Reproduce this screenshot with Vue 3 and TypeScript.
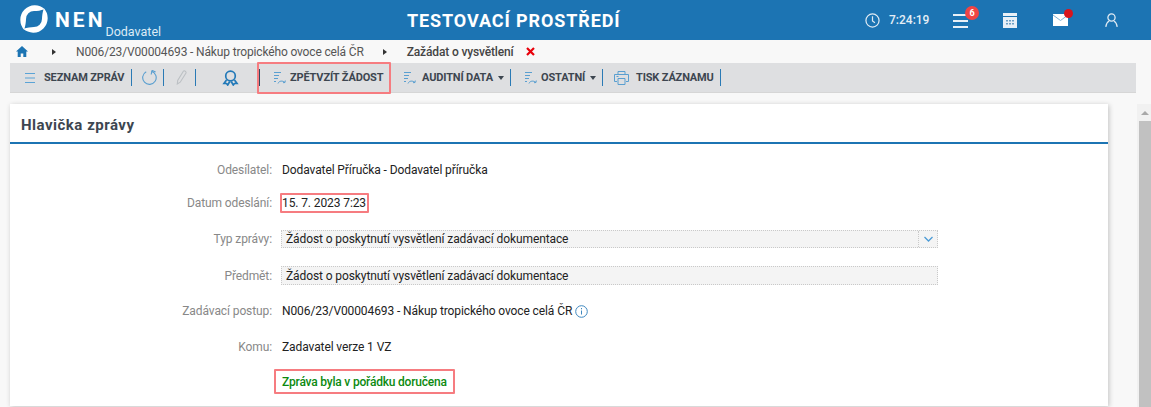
<script setup lang="ts">
const rows = [
  { label: 'Odesílatel:', value: 'Dodavatel Příručka - Dodavatel příručka' },
]
</script>

<template>
  <div class="page">
    <header class="top">
      <div class="brand">
        <svg class="logo" width="30" height="30" viewBox="2 2 32 32">
          <path d="M7.500 29.400A15.500 15.500 0 0 1 29.400 7.500C25 9 21.500 9.300 18 9.500A8.500 8.500 0 0 0 9.500 18C9.300 21.500 9 25 7.500 29.400Z" fill="#fff" />
          <path d="M7.500 29.400A15.500 15.500 0 0 1 29.400 7.500C25 9 21.500 9.300 18 9.500A8.500 8.500 0 0 0 9.500 18C9.300 21.500 9 25 7.500 29.400Z" fill="#fff" transform="rotate(180 18 18)" />
        </svg>
        <span class="nen">NEN</span>
        <span class="role">Dodavatel</span>
      </div>
      <div class="env">TESTOVACÍ PROSTŘEDÍ</div>
      <div class="tools">
        <svg class="clock" width="15" height="15" viewBox="0 0 16 16" fill="none" stroke="#dfeaf3" stroke-width="1.300">
          <circle cx="8" cy="8" r="7" /><path d="M8 3.500v4.900l2.600 2" />
        </svg>
        <span class="time">7:24:19</span>
        <span class="menu"><i /><i /><i /><b>6</b></span>
        <svg class="cal" width="14" height="15" viewBox="0 0 14 15">
          <rect width="14" height="15" fill="#e8f0f7" />
          <rect x="0" y="3" width="14" height="1" fill="#1c74b3" />
          <path d="M3 7h2v1.400H3zM6 7h2v1.400H6zM9 7h2v1.400H9zM3 10h2v1.400H3zM6 10h2v1.400H6zM9 10h2v1.400H9z" fill="#6d9fc5" />
        </svg>
        <span class="mail">
          <svg width="15" height="12" viewBox="0 0 15 12">
            <rect width="15" height="12" fill="#fff" />
            <path d="M0 1l7.500 5.500L15 1" fill="none" stroke="#7fb0d4" />
          </svg>
          <b />
        </span>
        <svg class="user" width="13" height="14" viewBox="0 0 13 14" fill="none" stroke="#dfeaf3" stroke-width="1.300">
          <circle cx="6.500" cy="4.500" r="3.600" /><path d="M.8 13.800c.4-3.300 1.800-5 3.300-5.800M12.200 13.800c-.4-3.300-1.800-5-3.300-5.800" />
        </svg>
      </div>
    </header>

    <nav class="crumbs">
      <svg width="12" height="11" viewBox="0 0 12 11"><path d="M6 0 0 5.500h1.700V11h3V7.500h2.600V11h3V5.500H12z" fill="#1c74b3" /></svg>
      <span class="arr first" />
      <span class="crumb">N006/23/V00004693 - Nákup tropického ovoce celá ČR</span>
      <span class="arr" />
      <strong class="crumb current">Zažádat o vysvětlení</strong>
      <svg class="close" width="9" height="9" viewBox="0 0 9 9"><path d="M1 1l7 7M8 1 1 8" stroke="#e8000b" stroke-width="2.200" /></svg>
    </nav>

    <div class="bar">
      <button class="tb b-list">
        <svg width="10" height="10" viewBox="0 0 10 10" stroke="#5aa3d6" stroke-width="1"><path d="M0 .5h10M0 5h10M0 9.500h10" /></svg>
        <span>SEZNAM ZPRÁV</span>
      </button>
      <i class="sep" />
      <div class="slot s-refresh">
        <svg width="15" height="15" viewBox="0 0 16 16" fill="none" stroke="#5a9fd0" stroke-width="1.200">
          <path d="M10.200 1.300A7.200 7.200 0 1 1 4.500 1.800" /><path d="M10.700 .4 9.800 4.800M10.700 .4 14.500 2.200" />
        </svg>
      </div>
      <i class="sep" />
      <div class="slot s-clip">
        <svg width="11" height="15" viewBox="0 0 11 15" fill="none" stroke="#bcc0c4" stroke-width="1.100">
          <path d="M7.500 1 1.700 10.500 1.300 14l2.900-1.800L10 3c.5-1-1.700-3-2.500-2Z" />
        </svg>
      </div>
      <i class="sep" />
      <div class="slot s-award">
        <svg width="17" height="16" viewBox="0 0 17 16" fill="none" stroke="#2279b8" stroke-width="1.700">
          <circle cx="8.500" cy="6" r="4.800" />
          <path d="M4.500 10 2 13.500h2.500l1.200 1.500L7.800 11.500M12.500 10l2.500 3.500h-2.500L11.300 15 9.200 11.500" />
        </svg>
      </div>
      <i class="sep dark" />
      <button class="tb b-back">
        <svg width="14" height="14" viewBox="0 0 14 14" fill="none" stroke="#5a9fd0" stroke-width="1"><path d="M1 1.500h7M1 4.500h5M1 7.500h4M1 10.500h2M5 12.500c1-3 5-3 7-1M12 11.500l.3-2M12 11.500l-2 .2" /></svg>
        <span>ZPĚTVZÍT ŽÁDOST</span>
      </button>
      <i class="sep dark" />
      <button class="tb b-audit">
        <svg width="14" height="14" viewBox="0 0 14 14" fill="none" stroke="#5a9fd0" stroke-width="1"><path d="M1 1.500h7M1 4.500h5M1 7.500h4M1 10.500h2M5 12.500c1-3 5-3 7-1M12 11.500l.3-2M12 11.500l-2 .2" /></svg>
        <span>AUDITNÍ DATA</span><em class="caret" />
      </button>
      <i class="sep" />
      <button class="tb b-other">
        <svg width="14" height="14" viewBox="0 0 14 14" fill="none" stroke="#5a9fd0" stroke-width="1"><path d="M1 1.500h7M1 4.500h5M1 7.500h4M1 10.500h2M5 12.500c1-3 5-3 7-1M12 11.500l.3-2M12 11.500l-2 .2" /></svg>
        <span>OSTATNÍ</span><em class="caret" />
      </button>
      <i class="sep" />
      <button class="tb b-print">
        <svg width="15" height="14" viewBox="0 0 15 14" fill="none" stroke="#5a9fd0" stroke-width="1"><path d="M4 3.500V.5h7v3M3 10.500H.5v-7h14v7H12M4 7.500h7v6H4z" /><path d="M2.500 5.500h2" /></svg>
        <span>TISK ZÁZNAMU</span>
      </button>
      <i class="sep" />
    </div>

    <div class="main">
      <section class="card">
        <h2>Hlavička zprávy</h2>
        <div class="form">
          <div class="row r1">
            <label>{{ rows[0].label }}</label>
            <span class="val">{{ rows[0].value }}</span>
          </div>
          <div class="row r2">
            <label>Datum odeslání:</label>
            <span class="val boxed date">15. 7. 2023 7:23</span>
          </div>
          <div class="row r3">
            <label>Typ zprávy:</label>
            <div class="field select">
              <span>Žádost o poskytnutí vysvětlení zadávací dokumentace</span>
              <span class="chev">
                <svg width="9" height="6" viewBox="0 0 9 6" fill="none" stroke="#4c9bd6" stroke-width="1.300"><path d="M.5 1 4.500 5 8.500 1" /></svg>
              </span>
            </div>
          </div>
          <div class="row r4">
            <label>Předmět:</label>
            <div class="field"><span>Žádost o poskytnutí vysvětlení zadávací dokumentace</span></div>
          </div>
          <div class="row r5">
            <label>Zadávací postup:</label>
            <span class="val">N006/23/V00004693 - Nákup tropického ovoce celá ČR</span>
            <svg class="info" width="13" height="13" viewBox="0 0 13 13" fill="none" stroke="#3f88bf"><circle cx="6.500" cy="6.500" r="5.800" /><path d="M6.500 5.500v4M6.500 3v1.300" /></svg>
          </div>
          <div class="row r6">
            <label>Komu:</label>
            <span class="val">Zadavatel verze 1 VZ</span>
          </div>
          <div class="row r7">
            <label />
            <span class="val boxed ok">Zpráva byla v pořádku doručena</span>
          </div>
        </div>
      </section>
      <div class="scroll">
        <span class="up" />
        <span class="thumb" />
      </div>
    </div>
  </div>
</template>

<style>
html, body { margin: 0; overflow: hidden; }
</style>

<style scoped>
.page { width: 1151px; height: 407px; overflow: hidden; background: #f8f8f8; font-family: Roboto, "Liberation Sans", sans-serif; color: #222; }
.top { height: 40px; background: #1c74b3; color: #fff; display: flex; align-items: center; }
.brand { display: flex; align-items: flex-start; padding-left: 19px; width: 380px; height: 40px; box-sizing: border-box; }
.logo { margin-top: 4px; flex: none; }
.nen { font-size: 21px; font-weight: 700; letter-spacing: 3px; margin-left: 6px; margin-top: 5px; line-height: 30px; }
.role { font-size: 12.500px; line-height: 14px; margin-top: 25px; color: #dcebf6; }
.env { width: 440px; padding-left: 27px; box-sizing: border-box; font-size: 18px; font-weight: 700; letter-spacing: .9px; }
.tools { display: flex; align-items: center; margin-left: 45px; }
.time { width: 40px; font-size: 12px; font-weight: 500; margin-left: 9px; color: #e4eef6; white-space: nowrap; }
.menu { position: relative; width: 15px; height: 14px; margin-left: 24px; margin-top: 2px; display: flex; flex-direction: column; justify-content: space-between; }
.menu i { display: block; height: 2px; background: #e8f0f7; }
.menu b { position: absolute; left: 12px; top: -8px; width: 14px; height: 14px; border-radius: 50%; background: #ef4444; font-size: 9px; line-height: 14px; text-align: center; color: #fff; }
.cal { margin-left: 35px; }
.mail { position: relative; display: block; margin-left: 36px; height: 12px; width: 15px; }
.mail svg { display: block; }
.mail b { position: absolute; left: 11px; top: -5px; width: 9px; height: 9px; border-radius: 50%; background: #d9141c; }
.user { margin-left: 37px; }

.crumbs { height: 23px; display: flex; align-items: center; padding-left: 16px; font-size: 12px; color: #555; letter-spacing: -.15px; }
.arr { width: 0; height: 0; border-left: 4px solid #333; border-top: 3.500px solid transparent; border-bottom: 3.500px solid transparent; margin: 0 20px 0 19px; }
.arr.first { margin-left: 24px; margin-right: 20px; }
.crumb { white-space: nowrap; }
.current { font-weight: 500; color: #444; }
.close { margin-left: 12px; }

.bar { margin-left: 10px; width: 1126px; height: 30px; background: #dedfe1; border-bottom: 1px solid #d6d6d6; box-sizing: border-box; display: flex; align-items: center; font-size: 11px; font-weight: 700; color: #3d4650; letter-spacing: -.15px; }
.tb { all: unset; display: flex; align-items: center; height: 29px; box-sizing: border-box; white-space: nowrap; font: inherit; letter-spacing: inherit; color: inherit; flex: none; }
.slot { display: flex; align-items: center; height: 29px; box-sizing: border-box; flex: none; }
.sep { display: block; width: 1px; height: 17px; background: #2a7ab5; flex: none; }
.sep.dark { background: #33485e; }
.b-list { width: 121px; padding-left: 15px; }
.b-list span { margin-left: 9px; }
.s-refresh { width: 31px; padding-left: 10px; }
.s-clip { width: 31px; padding-left: 12px; }
.s-award { width: 63px; padding-left: 26px; }
.b-back { position: relative; width: 130px; padding-left: 13px; }
.b-back span { margin-left: 3px; }
.b-back::after { content: ""; position: absolute; left: -3px; top: -1px; width: 134px; height: 32px; box-sizing: border-box; border: 2px solid #f67c80; border-radius: 1px; }
.b-audit { width: 119px; padding-left: 12px; }
.b-audit span { margin-left: 5px; }
.b-other { width: 91px; padding-left: 13px; }
.b-other span { margin-left: 3px; }
.caret { display: block; width: 0; height: 0; margin-left: 5px; border-top: 4px solid #3d4650; border-left: 3.500px solid transparent; border-right: 3.500px solid transparent; }
.b-print { width: 117px; padding-left: 11px; }
.b-print span { margin-left: 7px; }

.main { position: relative; margin-top: 11px; height: 303px; }
.card { margin-left: 10px; width: 1098px; height: 302px; background: #fff; box-shadow: 1px 1px 5px rgba(0,0,0,.22); }
h2 { margin: 0; height: 40px; box-sizing: border-box; border-bottom: 2px solid #1c74b3; padding: 4px 0 0 11px; font-size: 15px; font-weight: 700; color: #3d4650; letter-spacing: .5px; display: flex; align-items: center; }
.form { display: flex; flex-direction: column; font-size: 12px; letter-spacing: -.1px; }
.row { display: flex; align-items: center; height: 24px; flex: none; }
.row label { width: 262px; flex: none; text-align: right; color: #888; }
.val { margin-left: 10px; color: #222; white-space: nowrap; }
.r1 { margin-top: 14px; }
.r2 { margin-top: 9px; }
.r3 { margin-top: 15px; height: 18px; }
.r4 { margin-top: 18px; height: 19px; }
.r5 { margin-top: 14px; }
.r6 { margin-top: 12px; }
.r7 { margin-top: 10px; height: 25px; }
.boxed { border: 2px solid #f67c80; box-sizing: border-box; border-radius: 1px; display: flex; align-items: center; }
.date { margin-left: 8px; width: 89px; height: 20px; }
.ok { margin-left: 2px; width: 181px; padding-left: 6px; height: 25px; color: #0c8a10; font-weight: 500; letter-spacing: -.2px; }
.field { margin-left: 9px; width: 657px; height: 100%; background: #f4f4f4; border: 1px dotted #c9c9c9; box-sizing: border-box; padding-left: 4px; display: flex; align-items: center; justify-content: space-between; }
.chev { width: 18px; height: 100%; border-left: 1px dotted #c9c9c9; display: flex; align-items: center; justify-content: center; }
.info { margin-left: 3px; }

.scroll { position: absolute; left: 1137px; top: 0; width: 14px; height: 303px; background: #f1f1f1; }
.up { position: absolute; left: 4px; top: 7px; border-bottom: 4px solid #a8a8a8; border-left: 4px solid transparent; border-right: 4px solid transparent; }
.thumb { position: absolute; left: 2px; top: 17px; width: 12px; height: 286px; background: #c1c1c1; }
</style>
